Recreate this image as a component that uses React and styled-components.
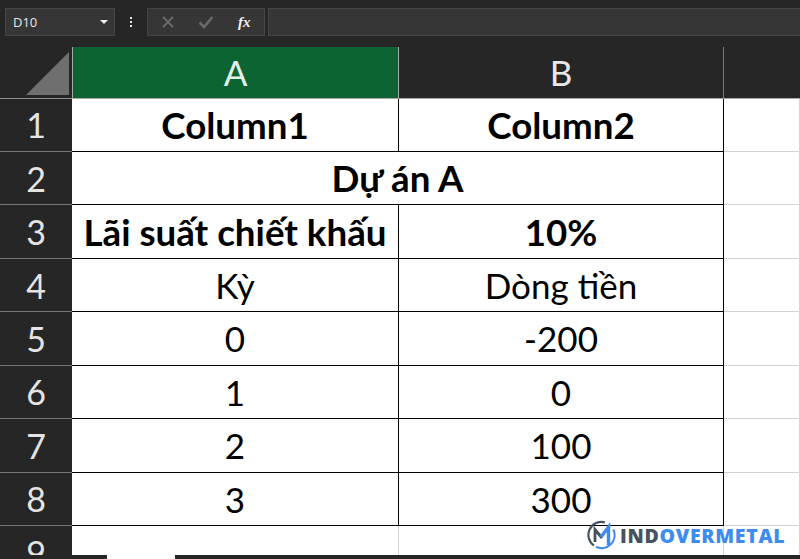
import React from "react";
import styled, { createGlobalStyle } from "styled-components";

const GlobalStyle = createGlobalStyle`
  html, body {
    margin: 0;
    padding: 0;
    background: #262626;
    overflow: hidden;
  }
`;

const Page = styled.div`
  position: relative;
  width: 800px;
  height: 559px;
  overflow: hidden;
  background: #262626;
  font-family: Lato, "Open Sans", "Liberation Sans", sans-serif;
`;

const FormulaBar = styled.div`
  display: flex;
  align-items: stretch;
  height: 28px;
  padding: 8px 0 0 5px;
  margin-bottom: 11px;
`;

const BarBox = styled.div`
  display: flex;
  align-items: center;
  background: #363636;
  border: 1px solid #454545;
  box-sizing: border-box;
`;

const NameBox = styled(BarBox)`
  width: 110px;
  padding: 0 6px 0 7px;
  justify-content: space-between;
  color: #e8e8e8;
  font-family: "Open Sans", sans-serif;
  font-size: 13px;
`;

const Caret = styled.span`
  width: 0;
  height: 0;
  border-left: 4px solid transparent;
  border-right: 4px solid transparent;
  border-top: 4px solid #f0f0f0;
`;

const Dots = styled.div`
  width: 32px;
  display: flex;
  flex-direction: column;
  align-items: center;
  justify-content: center;
  gap: 2px;
`;

const Dot = styled.span`
  width: 2px;
  height: 2px;
  background: #e6e6e6;
`;

const ActionBox = styled(BarBox)`
  width: 118px;
  margin-right: 3px;
  padding: 0 0 0 13px;
  gap: 23px;
`;

const FxLabel = styled.span`
  margin-left: 1px;
  font-family: "Liberation Serif", serif;
  font-style: italic;
  font-weight: 700;
  font-size: 15px;
  color: #eeeeee;
`;

const InputBox = styled(BarBox)`
  flex: 1;
  border-right: none;
`;

const Sheet = styled.div`
  display: grid;
  grid-template-columns: 72px 327px 325px 76px;
  grid-template-rows: 51.6px repeat(9, 53.43px);
`;

const Corner = styled.div`
  display: flex;
  align-items: flex-end;
  justify-content: flex-end;
  padding: 0 3px 3px 0;
  border-bottom: 1px solid #8f8f8f;
  box-sizing: border-box;
`;

const ColumnHead = styled.div`
  display: flex;
  align-items: center;
  justify-content: center;
  box-sizing: border-box;
  font-size: 35px;
  font-weight: 400;
  color: ${(p) => (p.$active ? "#e4efe8" : "#e8e8e8")};
  background: ${(p) => (p.$active ? "#0c6433" : "#262626")};
  border-bottom: 1px solid #a8a8a8;
  border-right: 1px solid ${(p) => (p.$active ? "#a8a8a8" : "#777")};
  border-left: ${(p) => (p.$active ? "1px solid #a8a8a8" : "none")};
`;

const HeadFiller = styled.div`
  border-bottom: 1px solid #a8a8a8;
  box-sizing: border-box;
`;

const RowHead = styled.div`
  display: flex;
  align-items: center;
  justify-content: center;
  box-sizing: border-box;
  overflow: hidden;
  font-size: 34px;
  color: #e4e4e4;
  background: #262626;
  border-bottom: 1px solid #777;
`;

const Cell = styled.div`
  display: flex;
  align-items: center;
  justify-content: center;
  box-sizing: border-box;
  grid-column: ${(p) => (p.$span ? `span ${p.$span}` : "auto")};
  font-size: ${(p) => (p.$bold ? "36.7px" : "35px")};
  font-weight: ${(p) => (p.$bold ? 700 : 400)};
  white-space: nowrap;
  color: #000;
  background: #fff;
  border-bottom: 1px solid #000;
  border-right: 1px solid #000;
`;

const BlankCell = styled.div`
  box-sizing: border-box;
  background: #fff;
  border-bottom: 1px solid #d4d4d4;
  border-right: 1px solid #d4d4d4;
`;

const BottomEdge = styled.div`
  position: absolute;
  left: 0;
  right: 0;
  bottom: 0;
  height: 4px;
  background: #262626;
`;

const EdgeNotch = styled.div`
  position: absolute;
  left: 107px;
  bottom: 0;
  width: 68px;
  height: 4px;
  background: #fff;
`;

const Logo = styled.div`
  position: absolute;
  left: 587px;
  top: 520px;
  display: flex;
  align-items: center;
  gap: 4px;
`;

const LogoText = styled.span`
  font-family: "Open Sans", sans-serif;
  font-weight: 800;
  font-size: 19.5px;
  letter-spacing: 0.7px;
  color: #3f8cf0;
`;

const LogoDark = styled.span`
  color: #46535f;
`;

const CloseIcon = () => (
  <svg width="14" height="14" viewBox="0 0 14 14">
    <path d="M2 2 L12 12 M12 2 L2 12" stroke="#6a6a6a" strokeWidth="2" fill="none" />
  </svg>
);

const CheckIcon = () => (
  <svg width="16" height="14" viewBox="0 0 16 14">
    <path d="M1.5 7.5 L6 12 L14.5 2" stroke="#6a6a6a" strokeWidth="2.6" fill="none" />
  </svg>
);

const CornerMark = () => (
  <svg width="43" height="43" viewBox="0 0 43 43">
    <path d="M43 0 V43 H0 Z" fill="#6f6f6f" />
  </svg>
);

const LogoMark = () => (
  <svg width="29" height="30" viewBox="0 0 29 30">
    <path d="M17.9 2.4 A13 13 0 0 0 7 25.6" stroke="#46535f" strokeWidth="2.2" fill="none" />
    <path d="M26.3 9.5 A13 13 0 0 1 9 26.8" stroke="#3f8cf0" strokeWidth="2.2" fill="none" />
    <path d="M8 22 V9.5 L15 18" stroke="#46535f" strokeWidth="2.8" fill="none" />
    <path d="M14 17 L21.5 7 V25" stroke="#3f8cf0" strokeWidth="3.4" fill="none" />
  </svg>
);

const rows = [
  { n: 1, cells: ["Column1", "Column2"], bold: true },
  { n: 2, cells: ["Dự án A"], bold: true, span: 2 },
  { n: 3, cells: ["Lãi suất chiết khấu", "10%"], bold: true },
  { n: 4, cells: ["Kỳ", "Dòng tiền"] },
  { n: 5, cells: ["0", "-200"] },
  { n: 6, cells: ["1", "0"] },
  { n: 7, cells: ["2", "100"] },
  { n: 8, cells: ["3", "300"] },
];

export default function App() {
  return (
    <Page>
      <GlobalStyle />
      <FormulaBar>
        <NameBox>
          D10
          <Caret />
        </NameBox>
        <Dots>
          <Dot />
          <Dot />
          <Dot />
        </Dots>
        <ActionBox>
          <CloseIcon />
          <CheckIcon />
          <FxLabel>fx</FxLabel>
        </ActionBox>
        <InputBox />
      </FormulaBar>
      <Sheet>
        <Corner>
          <CornerMark />
        </Corner>
        <ColumnHead $active>A</ColumnHead>
        <ColumnHead>B</ColumnHead>
        <HeadFiller />
        {rows.map((row) => (
          <React.Fragment key={row.n}>
            <RowHead>{row.n}</RowHead>
            {row.cells.map((text) => (
              <Cell key={text} $bold={row.bold} $span={row.span}>
                {text}
              </Cell>
            ))}
            <BlankCell />
          </React.Fragment>
        ))}
        <RowHead>9</RowHead>
        <BlankCell />
        <BlankCell />
        <BlankCell />
      </Sheet>
      <BottomEdge />
      <EdgeNotch />
      <Logo>
        <LogoMark />
        <LogoText>
          <LogoDark>IND</LogoDark>OVERMETAL
        </LogoText>
      </Logo>
    </Page>
  );
}
